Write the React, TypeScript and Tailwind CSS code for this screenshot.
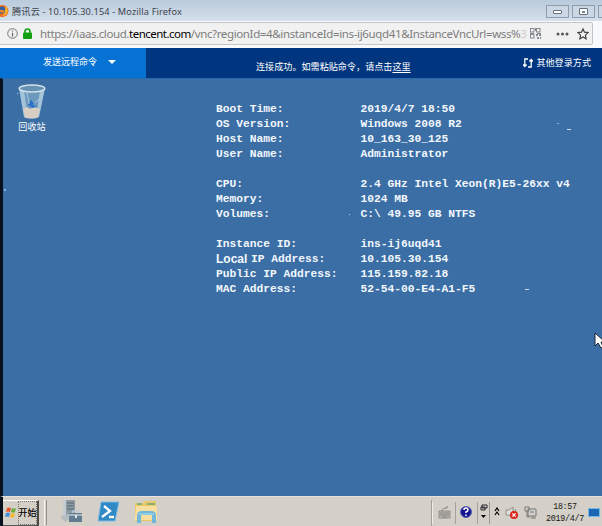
import React from "react";

const info = [
  ["Boot Time:", "2019/4/7 18:50"],
  ["OS Version:", "Windows 2008 R2"],
  ["Host Name:", "10_163_30_125"],
  ["User Name:", "Administrator"],
  ["", ""],
  ["CPU:", "2.4 GHz Intel Xeon(R)E5-26xx v4"],
  ["Memory:", "1024 MB"],
  ["Volumes:", "C:\\ 49.95 GB NTFS"],
  ["", ""],
  ["Instance ID:", "ins-ij6uqd41"],
  ["Local IP Address:", "10.105.30.154"],
  ["Public IP Address:", "115.159.82.18"],
  ["MAC Address:", "52-54-00-E4-A1-F5"],
];

function Firefox() {
  return (
    <svg width="9" height="12" viewBox="0 0 9 12" className="shrink-0">
      <circle cx="2.5" cy="6" r="6" fill="#e86a1c" />
      <circle cx="2" cy="5" r="3.5" fill="#2e5ca8" />
      <path d="M0 5c2-1 3 1 5 0L3.5 8 0 7Z" fill="#f08b25" />
      <path d="M5 1c2 1 3 3 2.5 6C7 9 5 11 2 11c2-1 4-4 3-10Z" fill="#fbb72d" />
    </svg>
  );
}

function TitleBar() {
  return (
    <div className="flex h-[21px] items-start bg-gradient-to-b from-[#b9cadc] to-[#d5e0ec]">
      <div className="pt-[5px]"><Firefox /></div>
      <div className="ml-[3px] mt-[4px] whitespace-nowrap font-['Noto_Sans','Noto_Sans_CJK_SC',sans-serif] text-[9.2px] leading-4 tracking-[0.13px] text-[#3d444d]">
        腾讯云 - 10.105.30.154 - Mozilla Firefox
      </div>
      <div className="ml-auto flex gap-[3px] pt-[5px]">
        <div className="flex h-[13px] w-[23px] items-center justify-center border border-[#8e9cae] bg-[#cbd7e5]">
          <div className="h-[4px] w-[9px] rounded-[1px] border border-[#646e7b] bg-white" />
        </div>
        <div className="flex h-[13px] w-[23px] items-center justify-center border border-[#8e9cae] bg-[#cbd7e5]">
          <div className="flex h-[7px] w-[9px] items-center justify-center rounded-[1px] border border-[#646e7b] bg-white">
            <div className="h-[2px] w-[3px] bg-[#7b8490]" />
          </div>
        </div>
        <div className="h-[13px] w-[4px] border-y border-l border-[#8e9cae] bg-[#cbd7e5]" />
      </div>
    </div>
  );
}

function AddressBar() {
  return (
    <div className="h-[27px] bg-[#f8f9fa] pt-px">
      <div className="flex h-[23px] w-[593px] items-center rounded-r-[2px] border-y border-r border-[#c4c5c7] bg-[#f1f1f1] pl-[7px]">
        <svg width="11" height="11" viewBox="0 0 11 11" className="shrink-0">
          <circle cx="5.5" cy="5.5" r="4.8" fill="none" stroke="#777" />
          <path d="M5.5 2.4v1.2M5.5 4.8v3.6" stroke="#666" strokeWidth="1.2" />
        </svg>
        <svg width="9" height="11" viewBox="0 0 9 11" className="ml-[5px] shrink-0">
          <rect y="4.5" width="9" height="6.5" rx="1" fill="#12a012" />
          <path d="M2 5V3.5a2.5 2.5 0 0 1 5 0V5" fill="none" stroke="#12a012" strokeWidth="1.6" />
        </svg>
        <div className="ml-[8px] w-[486px] shrink-0 whitespace-nowrap font-['Noto_Sans',sans-serif] text-[11.5px] leading-[20px] tracking-[-0.36px] text-[#7d7d7d]">
          <span className="tracking-[-0.41px]">https://iaas.cloud.</span><span className="tracking-[-0.51px] text-black">tencent.com</span>/vnc?regionId=4&amp;instanceId=ins-ij6uqd41&amp;InstanceVncUrl=wss%<span className="text-[#ccc]">3</span>
        </div>
        <svg width="11" height="11" viewBox="0 0 11 11" className="ml-[4px] shrink-0">
          <g fill="none" stroke="#858a90"><rect x=".5" y=".5" width="3.5" height="3.5" /><rect x="6.5" y=".5" width="3.5" height="3.5" /><rect x=".5" y="6.5" width="3.5" height="3.5" /></g>
          <path d="M6 6h2v2H6zM9 6h2v2H9zM7 9h2v2H7zM10 9h1v2h-1zM5 0v3h1V0zM0 5h4v1H0zM7 5h4v1H7z" fill="#858a90" />
        </svg>
        <svg width="13" height="4" viewBox="0 0 13 4" className="ml-[15px] shrink-0" fill="#555">
          <circle cx="2" cy="2" r="1.5" /><circle cx="6.5" cy="2" r="1.5" /><circle cx="11" cy="2" r="1.5" />
        </svg>
        <svg width="12" height="12" viewBox="0 0 12 12" className="ml-[8px] shrink-0">
          <path d="m6 .9 1.5 3.3 3.6.4-2.7 2.5.7 3.7L6 9l-3.1 1.8.7-3.7L.9 4.6l3.6-.4Z" fill="none" stroke="#444" strokeWidth="1.2" />
        </svg>
      </div>
    </div>
  );
}

function ConsoleBar() {
  return (
    <div className="flex h-[30px] bg-[#003580] font-['Noto_Sans_CJK_SC',sans-serif] text-[9px] text-white">
      <div className="flex h-[30px] w-[146px] items-center bg-[#0672d4] pb-[2px] pl-[43px]">
        <span className="whitespace-nowrap">发送远程命令</span>
        <span className="ml-[11px] border-x-[4px] border-t-[4px] border-x-transparent border-t-white" />
      </div>
      <div className="ml-[110px] whitespace-nowrap pt-[11px] text-[9.1px] leading-[14px]">
        连接成功。如需粘贴命令，请点击<span className="underline underline-offset-2">这里</span>
      </div>
      <div className="ml-auto flex items-center pr-[11px] pb-px">
        <svg width="10" height="10" viewBox="0 0 10 10" fill="none" stroke="white" strokeWidth="1.3">
          <path d="M5 1H1.8v7M0 6.5l1.8 2 1.8-2M5 9h3.2V2M6.4 3.5l1.8-2 1.8 2" />
        </svg>
        <span className="ml-[3px] whitespace-nowrap text-[9.1px]">其他登录方式</span>
      </div>
    </div>
  );
}

function RecycleBin() {
  return (
    <div className="flex w-[58px] flex-col items-center pt-[5px]">
      <svg width="30" height="36" viewBox="0 0 30 36">
        <path d="M2 4 7 33q8 4 15 0L28 4Z" fill="#719cc0" fillOpacity=".9" />
        <path d="m2 4 5 29q2 2 4 1L7 6ZM28 4l-6 29-3 1L23 6Z" fill="#b7d0e1" fillOpacity=".75" />
        <path d="m6 25 4-2 3 2 4-2 6 2-2 8q-6 3-13 0Z" fill="#d8cec4" />
        <path d="m11 21 3-5 3 4-2 1 5 1-4 2Z" fill="#2970c9" />
        <path d="m24 13-6 6M10 9l2 11" stroke="#a9c9dc" />
        <ellipse cx="15" cy="4.5" rx="12.8" ry="3.4" fill="#6591b5" stroke="#d3e1e9" strokeWidth="1.5" />
      </svg>
      <span className="mt-px whitespace-nowrap font-['Noto_Sans_CJK_SC',sans-serif] text-[9.1px] leading-[10px] text-white">回收站</span>
    </div>
  );
}

function Specks() {
  return (
    <>
      <i className="absolute left-[17px] top-[93px] h-px w-px bg-[#b6d3ee]" />
      <i className="absolute left-[4px] top-[189px] h-[2px] w-[2px] bg-[#82b2db]" />
      <i className="absolute left-[557px] top-[123px] h-px w-[2px] bg-[#8cb7dd]" />
      <i className="absolute left-[567px] top-[129px] h-px w-[4px] bg-[#cce0ef]" />
      <i className="absolute left-[525px] top-[289px] h-px w-[4px] bg-[#bed7ec]" />
      <i className="absolute left-[349px] top-[214px] h-px w-px bg-[#aacbea]" />
      <svg width="9" height="17" viewBox="0 0 9 17" className="absolute left-[594px] top-[332px]">
        <path d="M1 1v13l3-3 3 5 2-1-2-5h4Z" fill="white" stroke="#182535" />
      </svg>
    </>
  );
}

function Desktop() {
  return (
    <div className="flex h-[418px] border-l-[3px] border-t border-l-[#07111d] border-t-[#286bad] bg-[#3a6ea5]">
      <RecycleBin />
      <div className="ml-[155px] pt-[23px] font-['Liberation_Mono',monospace] text-[11.25px] font-bold leading-[15px] text-[#f4f8ff]">
        {info.map(([label, value], i) => (
          <div key={i} className="flex h-[15px] whitespace-pre">
            {label.startsWith("Local") ? (
              <span className="flex w-[144.5px]">
                <span className="w-[35px] font-['Liberation_Sans',sans-serif] text-[12px]">Local</span>
                <span>{label.slice(6)}</span>
              </span>
            ) : (
              <span className="w-[144.5px]">{label}</span>
            )}
            <span>{value}</span>
          </div>
        ))}
      </div>
    </div>
  );
}

function Taskbar() {
  return (
    <div className="flex h-[30px] border-l-[3px] border-t border-l-[#07111d] border-t-[#e5e2dc] bg-[#d4d0c8] pt-[3px]">
      <div className="flex h-[26px] w-[36px] items-center border-b border-r-[2px] border-t border-b-[#555] border-r-[#4b4945] border-t-white pl-[2px]">
        <svg width="11" height="12" viewBox="0 0 11 12" className="shrink-0">
          <path d="M2 1q2-1 4 0L5 5Q3 4 1 5Z" fill="#e95426" /><path d="M7 1q2 1 4 0l-1 4Q8 6 6 5Z" fill="#69ad3d" />
          <path d="M1 6q2-1 4 0l-1 4Q2 9 0 10Z" fill="#438bd4" /><path d="M6 6q2 1 4 0l-1 4q-2 1-4 0Z" fill="#f3b82c" />
        </svg>
        <div className="ml-[2px] flex h-[24px] w-[19px] items-center justify-center border border-dotted border-[#77736b] font-['Noto_Sans_CJK_SC',sans-serif] text-[9px] font-medium leading-3 text-black"><span className="whitespace-nowrap">开始</span></div>
      </div>
      <div className="ml-[5px] h-[25px] w-[3px] border-x border-l-[#f8f6f1] border-r-[#96928a]" />
      <svg width="22" height="24" viewBox="0 0 22 24" className="ml-[13px]">
        <path d="M3 0h12v18H3z" fill="#8e9ba4" /><path d="M3 0h3v18H3z" fill="#c3ccd0" />
        <path d="M7 3h7M7 6h7M7 9h7" stroke="#536471" /><path d="m0 17 8-3 4 4-7 4Z" fill="#b4bdc0" />
        <path d="M9 13h13v9H9z" fill="#627b91" /><path d="M9 15h13M13 13v-2h5v2" fill="none" stroke="#c0ccd5" strokeWidth="1.5" /><path d="M15 15h2v3h-2z" fill="#e2e5e4" />
      </svg>
      <svg width="23" height="22" viewBox="0 0 23 22" className="ml-[15px] mt-px">
        <path d="M4 1h18l-4 19H1Z" fill="#3189c5" stroke="#7fbde4" />
        <path d="m7 5 6 5-8 6M12 16h5" fill="none" stroke="white" strokeWidth="2.3" />
      </svg>
      <svg width="24" height="24" viewBox="0 0 24 24" className="ml-[14px]">
        <path d="M1 3h8l2-2h11v20H1Z" fill="#e8c969" /><path d="M2 6h21v14H1Z" fill="#f8dfa0" />
        <path d="M3 4h5M13 4h8" stroke="#8caf76" strokeWidth="2" />
        <path d="M5 23V16q0-3 3-3h9q3 0 3 3v7" fill="none" stroke="#71b7d9" strokeWidth="4" />
        <path d="M5 14h15" stroke="#b4e1ee" />
      </svg>
      <div className="ml-auto flex h-[26px] w-[171px] border-l border-[#a29e96] pt-[2px]">
        <div className="h-[22px] w-px bg-[#efede8]" />
        <svg width="13" height="13" viewBox="0 0 13 13" className="ml-[5px] mt-[4px] shrink-0">
          <path d="M1 5h11v7H1Z" fill="#bab8b2" stroke="#8f8c86" /><path d="M2 7h9M2 9h9M4 11h5M4 5q0-3 5-3V0" fill="none" stroke="#85827c" />
        </svg>
        <div className="ml-[3px] h-[22px] w-[2px] border-r border-[#a6a29a]" />
        <svg width="12" height="12" viewBox="0 0 12 12" className="ml-[4px] mt-[4px] shrink-0">
          <circle cx="6" cy="6" r="5.5" fill="#15168d" stroke="#5765b7" />
          <path d="M4 4q0-2 2-2t2 2q0 1-2 2v1M6 8.5v1.5" fill="none" stroke="white" strokeWidth="1.5" />
        </svg>
        <div className="ml-[4px] h-[22px] w-[2px] border-r border-[#a6a29a]" />
        <svg width="8" height="16" viewBox="0 0 8 16" className="ml-[2px] mt-[2px] shrink-0">
          <path d="M2 1h5v3H2zM1 3h4v3H1z" fill="#ddd" stroke="#222" /><path d="M1 11h5l-2.5 3Z" />
        </svg>
        <div className="ml-px h-[22px] w-px bg-[#9b978f]" />
        <svg width="6" height="9" viewBox="0 0 6 9" className="ml-[4px] mt-[5px] shrink-0">
          <path d="m1 4 2-3 2 3M1 8l2-3 2 3" fill="none" stroke="black" strokeWidth="1.2" />
        </svg>
        <svg width="14" height="14" viewBox="0 0 14 14" className="ml-[5px] mt-[4px] shrink-0">
          <path d="M1 4h3l4-3v11L4 9H1ZM10 3q2 3 0 6" fill="#dfddd8" stroke="#918e89" />
          <circle cx="9" cy="9" r="4" fill="#dd251a" /><path d="m7.4 7.4 3.2 3.2m0-3.2-3.2 3.2" stroke="white" strokeWidth="1.3" />
        </svg>
        <svg width="14" height="13" viewBox="0 0 14 13" className="ml-[5px] mt-[4px] shrink-0">
          <path d="M4 3h8v7H4z" fill="#d1cfca" stroke="#777" /><path d="M7 12h5M9 10v2M1 1h4v4H1zM3 5v6h3M6 6h4" fill="none" stroke="#7b7975" />
        </svg>
        <div className="ml-[6px] mt-[-1px] w-[42px] text-center font-['Liberation_Mono',monospace] text-[8.4px] leading-[12px] tracking-[-0.3px] text-[#151515]">
          <div>18:57</div><div>2019/4/7</div>
        </div>
        <div className="ml-[2px] mt-[6px] h-[9px] w-[12px] shrink-0 border border-[#79b7e4] bg-[#1966b3]" />
      </div>
    </div>
  );
}

export default function App() {
  return (
    <main className="relative h-[526px] w-[602px] overflow-hidden bg-[#3a6ea5]">
      <TitleBar />
      <AddressBar />
      <ConsoleBar />
      <Desktop />
      <Taskbar />
      <Specks />
    </main>
  );
}
